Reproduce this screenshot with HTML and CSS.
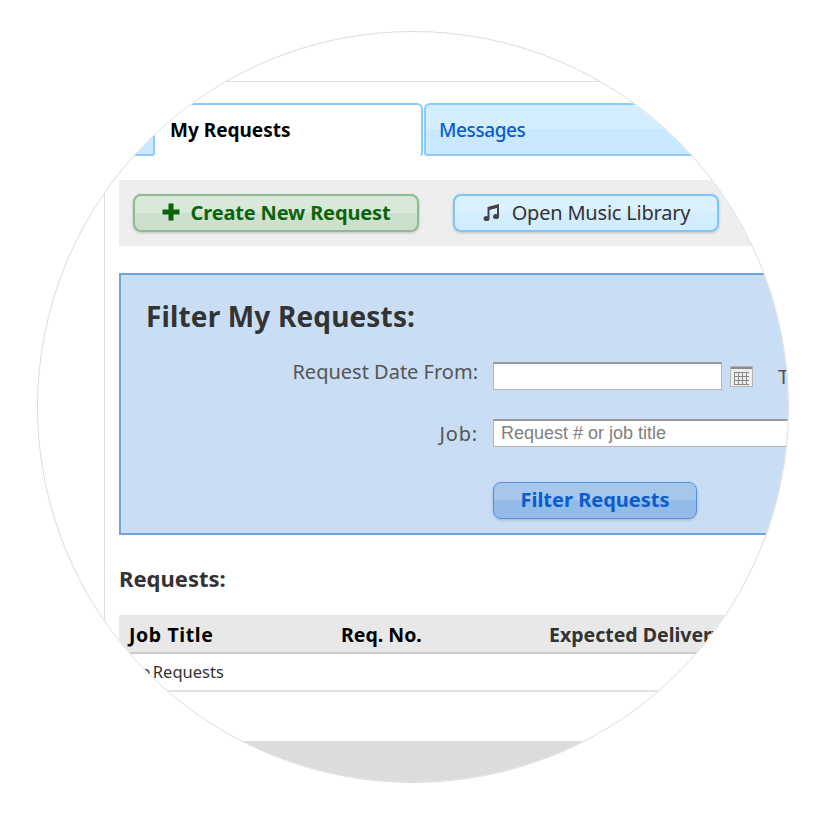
FILE: index.html
```html
<!DOCTYPE html>
<html lang="en">
  <head>
    <meta charset="UTF-8">
    <title>My Requests</title>
    <link rel="stylesheet" href="styles.css">
  </head>
  <body>
    <div class="lens">
      <div class="frame">
        <div class="tabs">
          <a class="tab tab-first"></a>
          <a class="tab tab-active">My Requests</a>
          <a class="tab tab-wide">Messages</a>
        </div>

        <div class="toolbar">
          <button type="button" class="btn btn-green">
            <svg class="btn-icon" width="18" height="18" viewBox="0 0 18 18"><path d="M6.500 0.500h5v6h6v5h-6v6h-5v-6h-6v-5h6z" fill="#0a640a"/></svg>
            Create New Request
          </button>
          <button type="button" class="btn btn-blue">
            <svg class="btn-icon" width="18" height="18" viewBox="0 0 18 18"><path d="M5.500 4 17 1v12.500a3 2.400 0 1 1-2-2.200V5L7.500 7v8.500a3 2.400 0 1 1-2-2.200z" fill="#444"/></svg>
            Open Music Library
          </button>
        </div>

        <div class="filter">
          <h2 class="filter-title">Filter My Requests:</h2>
          <div class="filter-row row-date">
            <label class="filter-label">Request Date From:</label>
            <input class="field" type="text">
            <svg class="cal" width="23" height="21" viewBox="0 0 23 21">
              <rect x="0.500" y="0.500" width="22" height="20" fill="#eee" stroke="#b5b5b5"/>
              <rect x="1" y="1" width="21" height="2" fill="#8a8a8a"/>
              <path d="M4 6.500h15M4 10.500h15M4 14.500h15M4 18.500h15M4.500 6v13M8.500 6v13M12.500 6v13M16.500 6v13" stroke="#888" fill="none"/>
            </svg>
            <span class="filter-label label-to">To:</span>
          </div>
          <div class="filter-row row-job">
            <label class="filter-label">Job:</label>
            <input class="field" type="text" placeholder="Request # or job title">
          </div>
          <div class="filter-row row-submit">
            <span></span>
            <button type="button" class="btn btn-filter">Filter Requests</button>
          </div>
        </div>

        <h3 class="section-title">Requests:</h3>
        <table class="requests">
          <thead>
            <tr>
              <th class="col-job">Job Title</th>
              <th class="col-req">Req. No.</th>
              <th>Expected Delivery Date</th>
            </tr>
          </thead>
          <tbody>
            <tr>
              <td colspan="3">No Requests</td>
            </tr>
          </tbody>
        </table>
      </div>
      <div class="footer"></div>
    </div>
  </body>
</html>
```

FILE: styles.css
```css
* {
  box-sizing: border-box;
}

body {
  margin: 0;
  background: white;
  font-family: "Noto Sans", "DejaVu Sans", sans-serif;
  color: #333;
}

.lens {
  width: 752px;
  height: 752px;
  margin: 31px 0 0 37px;
  border: 1px solid #ddd;
  border-radius: 50%;
  overflow: hidden;
  background: white;
}

.frame {
  width: 900px;
  height: 660px;
  margin: 49px 0 0 66px;
  padding: 21px 0 0 14px;
  border-top: 1px solid #ddd;
  border-left: 1px solid #ddd;
}

/* tabs */
.tabs {
  display: flex;
  gap: 1px;
  height: 53px;
  margin-left: -14px;
}

.tab {
  display: block;
  padding: 11px 0 0 13px;
  font-size: 19px;
  line-height: 28px;
  font-weight: 500;
  letter-spacing: -.4px;
  color: #0a5ccc;
  background: linear-gradient(#d5eeff 50%, #c8e9ff 50%);
  border: 2px solid #8accfb;
  border-radius: 6px 6px 3px 3px;
}

.tab-first {
  width: 50px;
}

.tab-active {
  width: 267px;
  padding-left: 14px;
  font-weight: 700;
  letter-spacing: 0;
  color: black;
  background: white;
  border-bottom: none;
  border-left: none;
}

.tab-wide {
  width: 400px;
}

/* toolbar */
.toolbar {
  display: flex;
  gap: 34px;
  height: 66px;
  margin-top: 24px;
  padding: 14px 0 0 14px;
  background: #eee;
}

.btn {
  display: flex;
  align-items: center;
  justify-content: center;
  gap: 11px;
  height: 38px;
  padding: 0 0 2px;
  border-radius: 8px;
  font-family: inherit;
  font-size: 20px;
  box-shadow: 0 1px 3px rgba(0, 0, 0, .2);
}

.btn-green {
  width: 286px;
  font-weight: 700;
  letter-spacing: -.15px;
  color: #0a640a;
  background: linear-gradient(#d9e9d9 50%, #cde0cd 50%);
  border: 2px solid #8dbb8d;
}

.btn-blue {
  width: 266px;
  gap: 12px;
  letter-spacing: -.2px;
  color: #333;
  background: linear-gradient(#dbf1ff 50%, #d2edff 50%);
  border: 2px solid #7cc6fb;
}

/* filter box */
.filter {
  height: 262px;
  margin-top: 27px;
  padding-top: 21px;
  background: #c9ddf5;
  border: 2px solid #6fa3e0;
}

.filter-title {
  margin: 0 0 26px 25px;
  font-size: 28px;
  line-height: 40px;
  font-weight: 700;
  letter-spacing: .15px;
}

.filter-row {
  display: grid;
  grid-template-columns: 372px 1fr;
  align-items: center;
}

.row-date {
  grid-template-columns: 372px 229px auto auto 1fr;
  height: 28px;
}

.row-date label {
  align-self: start;
  line-height: 20px;
}

.row-job {
  height: 28px;
  margin-top: 29px;
}

.row-job label {
  letter-spacing: .8px;
}

.row-submit {
  margin-top: 35px;
}

.filter-label {
  padding-right: 15px;
  text-align: right;
  font-size: 20px;
  color: #555;
}

.cal {
  margin-left: 8px;
}

.label-to {
  margin-left: 25px;
}

.field {
  width: 100%;
  height: 28px;
  padding: 0 7px;
  background: white;
  border: 1px solid #b5b5b5;
  border-top: 2px solid #999;
  border-radius: 0;
  font-family: "Liberation Sans", sans-serif;
  font-size: 18px;
}

.field::placeholder {
  color: #808080;
}

.btn-filter {
  width: 204px;
  height: 37px;
  font-weight: 700;
  color: #0a5ccc;
  background: linear-gradient(#a6c7ec 50%, #93bbe8 50%);
  border: 1px solid #4f92df;
}

/* table */
.section-title {
  margin: 27px 0 0;
  font-size: 22px;
  line-height: 32px;
  font-weight: 700;
}

.requests {
  width: 100%;
  margin-top: 21px;
  border-collapse: collapse;
  font-size: 19.500px;
}

.requests th {
  height: 38px;
  padding: 2px 10px 0;
  text-align: left;
  font-weight: 700;
  background: #e8e8e8;
  border-bottom: 2px solid #ccc;
}

.col-job {
  width: 212px;
  letter-spacing: .6px;
  color: black;
}

.col-req {
  width: 208px;
  color: black;
}

.requests td {
  height: 38px;
  padding: 0 9px 2px;
  font-size: 16.500px;
  word-spacing: -2px;
  border-bottom: 2px solid #e2e2e2;
}

.footer {
  height: 60px;
  background: #dcdcdc;
}
```
